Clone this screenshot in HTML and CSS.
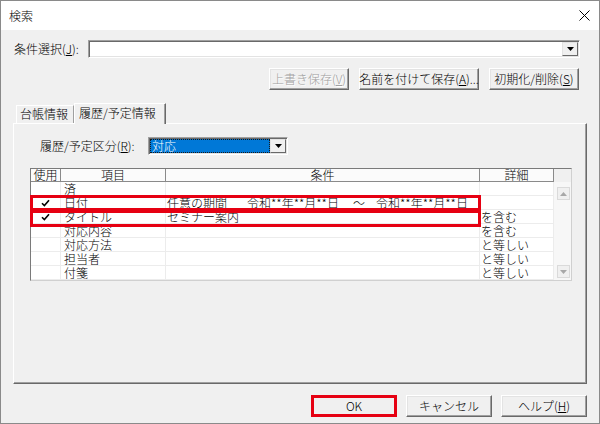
FILE: index.html
```html
<html>
    <head>
        <title>検索</title>
        <link rel="stylesheet" href="styles.css">
    </head>
    <body>
        <div class="dialog">
            <div class="titlebar">
                <span class="title">検索</span>
                <svg class="close" width="11" height="11" viewBox="0 0 11 11"><path d="M0.5 0.5 L10.5 10.5 M10.5 0.5 L0.5 10.5" stroke="#000" stroke-width="1" fill="none"/></svg>
            </div>
            <div class="content">
                <div class="cond-row">
                    <span class="cond-label">条件選択(<u>J</u>):</span>
                    <div class="combo cond-combo">
                        <div class="combo-text"></div>
                        <div class="drop"><svg width="7" height="4" viewBox="0 0 7 4"><polygon points="0,0 7,0 3.5,4" fill="#000"/></svg></div>
                    </div>
                </div>
                <div class="save-row">
                    <div class="btn disabled w80">上書き保存(<u>V</u>)</div>
                    <div class="btn w120">名前を付けて保存(<u>A</u>)...</div>
                    <div class="btn w90">初期化/削除(<u>S</u>)</div>
                </div>

                <div class="tabs">
                    <div class="tab">台帳情報</div>
                    <div class="tab active">履歴/予定情報</div>
                </div>
                <div class="panel">
                    <div class="kind-row">
                        <span class="kind-label">履歴/予定区分(<u>R</u>):</span>
                        <div class="combo kind-combo">
                            <div class="combo-text selected">対応</div>
                            <div class="drop"><svg width="7" height="4" viewBox="0 0 7 4"><polygon points="0,0 7,0 3.5,4" fill="#000"/></svg></div>
                        </div>
                    </div>

                    <div class="list">
                        <div class="list-head">
                            <div class="hcell c1">使用</div>
                            <div class="hcell c2">項目</div>
                            <div class="hcell c3">条件</div>
                            <div class="hcell c4">詳細</div>
                            <div class="hcell c5"></div>
                        </div>
                        <div class="list-body">
                            <div class="rows">
                                <div class="row">
                                    <div class="cell c1"></div>
                                    <div class="cell c2">済</div>
                                    <div class="cell c3"></div>
                                    <div class="cell c4"></div>
                                </div>
                                <div class="row">
                                    <div class="cell c1"><svg width="9" height="8" viewBox="0 0 9 8"><path d="M1 4.2 L3.4 6.6 L8 1.2" stroke="#000" stroke-width="1.6" fill="none"/></svg></div>
                                    <div class="cell c2">日付</div>
                                    <div class="cell c3"><span class="period">任意の期間</span><span class="date1">令和**年**月**日</span><span class="tilde">～</span><span>令和**年**月**日</span></div>
                                    <div class="cell c4"></div>
                                </div>
                                <div class="row">
                                    <div class="cell c1"><svg width="9" height="8" viewBox="0 0 9 8"><path d="M1 4.2 L3.4 6.6 L8 1.2" stroke="#000" stroke-width="1.6" fill="none"/></svg></div>
                                    <div class="cell c2">タイトル</div>
                                    <div class="cell c3">セミナー案内</div>
                                    <div class="cell c4">を含む</div>
                                </div>
                                <div class="row">
                                    <div class="cell c1"></div>
                                    <div class="cell c2">対応内容</div>
                                    <div class="cell c3"></div>
                                    <div class="cell c4">を含む</div>
                                </div>
                                <div class="row">
                                    <div class="cell c1"></div>
                                    <div class="cell c2">対応方法</div>
                                    <div class="cell c3"></div>
                                    <div class="cell c4">と等しい</div>
                                </div>
                                <div class="row">
                                    <div class="cell c1"></div>
                                    <div class="cell c2">担当者</div>
                                    <div class="cell c3"></div>
                                    <div class="cell c4">と等しい</div>
                                </div>
                                <div class="row">
                                    <div class="cell c1"></div>
                                    <div class="cell c2">付箋</div>
                                    <div class="cell c3"></div>
                                    <div class="cell c4">と等しい</div>
                                </div>
                            </div>
                            <div class="vscroll">
                                <div class="sbtn"><svg width="7" height="4" viewBox="0 0 7 4"><polygon points="0,4 7,4 3.5,0" fill="#a8a8a8"/></svg></div>
                                <div class="sbtn"><svg width="7" height="4" viewBox="0 0 7 4"><polygon points="0,0 7,0 3.5,4" fill="#a8a8a8"/></svg></div>
                            </div>
                        </div>
                        <!-- red marks -->
                        <div class="mark mark1"></div>
                        <div class="mark mark2"></div>
                    </div>
                </div>

                <div class="footer">
                    <div class="btn w86 ok">OK</div>
                    <div class="btn w86">キャンセル</div>
                    <div class="btn w86">ヘルプ(<u>H</u>)</div>
                </div>
            </div>
        </div>
    </body>
</html>
```

FILE: styles.css
```css
body{
    margin: 0px;
    background-color: #fff;
    font-family: "Noto Sans CJK JP", "Noto Sans", sans-serif;
    font-size: 12px;
    font-weight: 300;
    color: #000;
}
    div.dialog{
        width: 600px;
        height: 424px;
        box-sizing: border-box;
        border: 1px solid #8a8a8a;
        background-color: #f0f0f0;
        display: flex;
        flex-direction: column;
    }
    div.titlebar{
        height: 29px;
        background-color: #fff;
        display: flex;
        align-items: center;
        justify-content: space-between;
        padding: 0px 9px 0px 8px;
    }
    div.content{
        padding: 0px 12px;
    }
    div.cond-row{
        display: flex;
        align-items: center;
        height: 18px;
        margin: 10px 7px 0px 0px;
    }
    span.cond-label{
        width: 74px;
        padding-left: 1px;
        line-height: 18px;
    }
    div.combo{
        box-sizing: border-box;
        height: 18px;
        border: 1px solid;
        border-color: #a0a0a0 #fff #fff #a0a0a0;
        box-shadow: inset 1px 1px #696969, inset -1px -1px #e3e3e3;
        background-color: #fff;
        display: flex;
        padding: 1px;
    }
    div.cond-combo{
        flex: 1;
    }
    div.combo-text{
        flex: 1;
        line-height: 14px;
    }
    div.combo-text.selected{
        background-color: #0078d7;
        color: #fff;
        box-sizing: border-box;
        border: 1px dotted #1a1a1a;
        line-height: 12px;
        padding-left: 1px;
    }
    div.drop{
        width: 16px;
        height: 14px;
        box-sizing: border-box;
        background-color: #f0f0f0;
        border: 1px solid;
        border-color: #e3e3e3 #696969 #696969 #e3e3e3;
        display: flex;
        align-items: center;
        justify-content: center;
    }
    div.save-row{
        display: flex;
        justify-content: flex-end;
        gap: 10px;
        margin: 10px 8px 0px 0px;
    }
    div.btn{
        box-sizing: border-box;
        height: 22px;
        border: 1px solid;
        border-color: #fff #696969 #696969 #fff;
        box-shadow: inset -1px -1px #a0a0a0, inset 1px 1px #e3e3e3;
        background-color: #f0f0f0;
        display: flex;
        align-items: center;
        justify-content: center;
        white-space: nowrap;
        line-height: 18px;
    }
    div.btn.disabled{
        color: #a0a0a0;
        text-shadow: 1px 1px #fff;
    }
    div.btn.ok{
        border: 3px solid #e60012;
        box-shadow: none;
    }
    .w80{ width: 80px; }
    .w90{ width: 90px; }
    .w120{ width: 120px; }
    .w86{ width: 86px; }

    div.tabs{
        display: flex;
        align-items: flex-end;
        height: 20px;
        margin-top: 13px;
        padding-left: 3px;
    }
    div.tab{
        box-sizing: border-box;
        width: 58px;
        height: 18px;
        border: 1px solid;
        border-color: #fff #a0a0a0 transparent #fff;
        border-bottom: none;
        padding-left: 3px;
        line-height: 16px;
        white-space: nowrap;
    }
    div.tab.active{
        width: 92px;
        height: 21px;
        padding-left: 4px;
        line-height: 18px;
        margin-bottom: -1px;
        position: relative;
        z-index: 1;
        background-color: #f0f0f0;
        border-right-color: #696969;
        box-shadow: inset -1px 0px #a0a0a0;
    }
    div.panel{
        height: 261px;
        box-sizing: border-box;
        border: 1px solid;
        border-color: #fff #696969 #696969 #fff;
        box-shadow: inset -1px -1px #a0a0a0;
        padding: 13px 14px 0px 16px;
    }
    div.kind-row{
        display: flex;
        align-items: center;
        height: 18px;
    }
    span.kind-label{
        width: 108px;
        padding-left: 10px;
        line-height: 18px;
    }
    div.kind-combo{
        width: 140px;
    }

    div.list{
        position: relative;
        margin-top: 13px;
        height: 113px;
        box-sizing: border-box;
        border: 1px solid;
        border-color: #7a7a7a #d0d0d0 #d0d0d0 #7a7a7a;
        background-color: #fff;
    }
    div.list-head{
        display: flex;
        height: 13px;
        background-color: #fbfbfb;
    }
    div.hcell{
        box-sizing: border-box;
        height: 13px;
        border-right: 1px solid #8a8a8a;
        border-bottom: 1px solid #8a8a8a;
        text-align: center;
        line-height: 12px;
    }
    div.hcell.c5{
        border-right: none;
        border-bottom: none;
        background-color: #f0f0f0;
    }
    .c1{ width: 30px; }
    .c2{ width: 105px; }
    .c3{ width: 314px; }
    .c4{ width: 74px; }
    .c5{ width: 17px; }

    div.list-body{
        display: flex;
        height: 98px;
    }
    div.rows{
        width: 523px;
    }
    div.row{
        display: flex;
        height: 14px;
        box-sizing: border-box;
        border-bottom: 1px solid #ececec;
    }
    div.cell{
        box-sizing: border-box;
        height: 13px;
        border-right: 1px solid #ececec;
        line-height: 13px;
        white-space: nowrap;
    }
    div.cell.c1{
        display: flex;
        align-items: center;
        justify-content: center;
    }
    div.cell.c2{
        padding-left: 3px;
    }
    div.cell.c3{
        padding-left: 1px;
    }
    div.cell.c4{
        padding-left: 1px;
    }
    span.period{
        display: inline-block;
        width: 80px;
    }
    span.date1{
        display: inline-block;
        width: 106px;
    }
    span.tilde{
        display: inline-block;
        width: 23px;
    }
    div.vscroll{
        width: 17px;
        box-sizing: border-box;
        background-color: #f7f7f7;
        display: flex;
        flex-direction: column;
        justify-content: space-between;
        align-items: center;
        padding: 5px 0px 2px 1px;
    }
    div.sbtn{
        width: 13px;
        height: 13px;
        box-sizing: border-box;
        border: 1px solid #dadada;
        background-color: #f0f0f0;
        display: flex;
        align-items: center;
        justify-content: center;
    }
    div.mark{
        position: absolute;
        left: -1px;
        width: 451px;
        box-sizing: border-box;
        border: 3px solid #e60012;
    }
    div.mark1{
        top: 26px;
        height: 16px;
    }
    div.mark2{
        top: 41px;
        height: 17px;
    }

    div.footer{
        display: flex;
        justify-content: flex-end;
        gap: 9px;
        margin-top: 11px;
    }
```
